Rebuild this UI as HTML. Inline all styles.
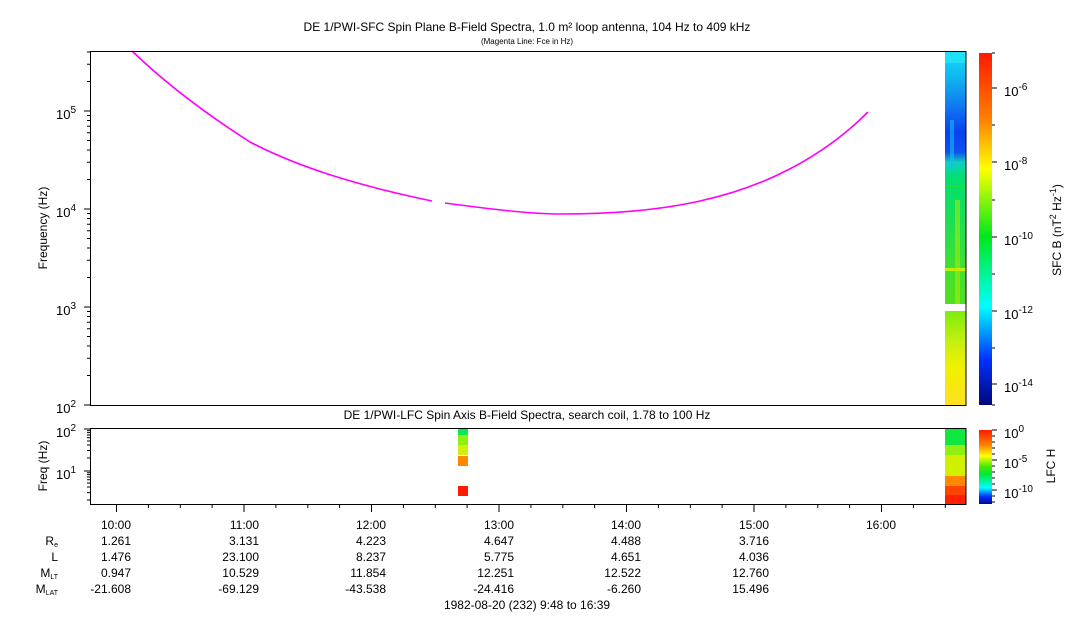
<!DOCTYPE html>
<html><head><meta charset="utf-8"><style>
html,body{margin:0;padding:0;background:#fff}
svg{display:block;font-family:"Liberation Sans",sans-serif}
</style></head><body>
<svg width="1083" height="620" viewBox="0 0 1083 620" xmlns="http://www.w3.org/2000/svg">
<defs>
<linearGradient id="jet" x1="0" y1="0" x2="0" y2="1">
<stop offset="0" stop-color="#ff1a00"/><stop offset="0.18" stop-color="#ff7a00"/><stop offset="0.33" stop-color="#ffff00"/><stop offset="0.52" stop-color="#00e81a"/><stop offset="0.72" stop-color="#00ffff"/><stop offset="0.87" stop-color="#0030ff"/><stop offset="1" stop-color="#00087a"/>
</linearGradient>
<linearGradient id="jet2" x1="0" y1="0" x2="0" y2="1">
<stop offset="0" stop-color="#ff1a00"/><stop offset="0.2" stop-color="#ff8000"/><stop offset="0.35" stop-color="#ffff00"/><stop offset="0.5" stop-color="#40e800"/><stop offset="0.6" stop-color="#00e83a"/><stop offset="0.78" stop-color="#00ffff"/><stop offset="0.9" stop-color="#0030ff"/><stop offset="1" stop-color="#000a8a"/>
</linearGradient>
<linearGradient id="spec" x1="0" y1="0" x2="0" y2="1">
<stop offset="0" stop-color="#10e0f8"/><stop offset="0.1" stop-color="#10b8f0"/><stop offset="0.22" stop-color="#1078f0"/><stop offset="0.32" stop-color="#0a40f0"/><stop offset="0.4" stop-color="#1050f0"/><stop offset="0.44" stop-color="#10d0c0"/><stop offset="0.5" stop-color="#00e070"/><stop offset="0.7" stop-color="#20e050"/><stop offset="0.85" stop-color="#40e030"/><stop offset="1" stop-color="#50e020"/>
</linearGradient>
<linearGradient id="spec2" x1="0" y1="0" x2="0" y2="1">
<stop offset="0" stop-color="#80ec10"/><stop offset="0.35" stop-color="#c8f010"/><stop offset="0.6" stop-color="#f0f000"/><stop offset="1" stop-color="#ffe020"/>
</linearGradient>
</defs>
<text x="527" y="31" font-size="12" text-anchor="middle">DE 1/PWI-SFC  Spin Plane B-Field Spectra, 1.0 m² loop antenna, 104 Hz to 409 kHz</text>
<text x="527" y="44" font-size="8" text-anchor="middle">(Magenta Line: Fce in Hz)</text>

<rect x="945" y="51" width="21" height="253" fill="url(#spec)"/>
<rect x="945" y="311" width="21" height="94" fill="url(#spec2)"/>
<rect x="945" y="51" width="21" height="12" fill="#20e0f8"/>
<rect x="945" y="185" width="21" height="2" fill="#20e040"/>
<rect x="945" y="268" width="21" height="3" fill="#c0f000"/>
<rect x="955" y="200" width="5" height="104" fill="#c0f000" opacity="0.45"/>
<rect x="950" y="120" width="4" height="50" fill="#10c0f0" opacity="0.6"/>

<path d="M132,51 C160,78 200,110 250,142 C300,168 360,186 432,201" fill="none" stroke="#ff00ff" stroke-width="1.6"/>
<path d="M445,203 C490,209 530,214 560,214 C610,214 660,210 700,201 C760,188 820,160 868,112" fill="none" stroke="#ff00ff" stroke-width="1.6"/>

<rect x="90.5" y="51.5" width="875.5" height="354" fill="none" stroke="#000"/>
<g stroke="#000">
<line x1="84" y1="111" x2="90" y2="111"/><line x1="84" y1="209" x2="90" y2="209"/><line x1="84" y1="307" x2="90" y2="307"/><line x1="84" y1="405" x2="90" y2="405"/>
<path d="M87,375.5h3M87,358.3h3M87,346h3M87,336.5h3M87,328.7h3M87,322.2h3M87,316.5h3M87,311.5h3
M87,277.5h3M87,260.3h3M87,248h3M87,238.5h3M87,230.7h3M87,224.2h3M87,218.5h3M87,213.5h3
M87,179.5h3M87,162.3h3M87,150h3M87,140.5h3M87,132.7h3M87,126.2h3M87,120.5h3M87,115.5h3
M87,81.5h3M87,64.3h3M87,52h3"/>
</g>
<g font-size="13" text-anchor="end">
<text x="76" y="119">10<tspan font-size="10" dy="-6">5</tspan></text>
<text x="76" y="217">10<tspan font-size="10" dy="-6">4</tspan></text>
<text x="76" y="315">10<tspan font-size="10" dy="-6">3</tspan></text>
<text x="76" y="413">10<tspan font-size="10" dy="-6">2</tspan></text>
</g>
<text transform="translate(47,228) rotate(-90)" font-size="12" text-anchor="middle">Frequency (Hz)</text>

<rect x="979" y="53" width="13" height="352" fill="url(#jet)"/>
<g stroke="#000"><path d="M992,53h3M992,88h5M992,125h3M992,162h5M992,200h3M992,237h5M992,274h3M992,311h5M992,348h3M992,384h5M992,405h3"/></g>
<g font-size="13">
<text x="1004" y="96">10<tspan font-size="10" dy="-6">-6</tspan></text>
<text x="1004" y="170">10<tspan font-size="10" dy="-6">-8</tspan></text>
<text x="1004" y="245">10<tspan font-size="10" dy="-6">-10</tspan></text>
<text x="1004" y="319">10<tspan font-size="10" dy="-6">-12</tspan></text>
<text x="1004" y="392">10<tspan font-size="10" dy="-6">-14</tspan></text>
</g>
<text transform="translate(1061,230) rotate(-90)" font-size="12" text-anchor="middle">SFC B (nT<tspan font-size="9" dy="-5">2</tspan><tspan dy="5"> Hz</tspan><tspan font-size="9" dy="-5">-1</tspan><tspan dy="5">)</tspan></text>

<text x="527" y="419" font-size="12" text-anchor="middle">DE 1/PWI-LFC  Spin Axis B-Field Spectra, search coil, 1.78 to 100 Hz</text>
<rect x="458" y="428" width="10" height="7" fill="#10e850"/>
<rect x="458" y="435" width="10" height="10" fill="#90f010"/>
<rect x="458" y="445" width="10" height="10" fill="#d0f010"/>
<rect x="458" y="456" width="10" height="10" fill="#ff8800"/>
<rect x="458" y="486" width="10" height="10" fill="#ff1a00"/>
<rect x="945" y="428" width="21" height="17" fill="#10e840"/>
<rect x="945" y="445" width="21" height="10" fill="#90f010"/>
<rect x="945" y="455" width="21" height="21" fill="#d0f000"/>
<rect x="945" y="476" width="21" height="10" fill="#ff8800"/>
<rect x="945" y="486" width="21" height="9" fill="#ff4400"/>
<rect x="945" y="495" width="21" height="9" fill="#ff2000"/>
<rect x="90.5" y="428.5" width="875.5" height="76" fill="none" stroke="#000"/>
<g stroke="#000">
<path d="M84,429h6M84,471h6M87,458h3M87,450.5h3M87,445h3M87,441h3M87,437.7h3M87,435h3M87,432.6h3M87,430.6h3M87,500h3M87,492.6h3M87,487h3M87,483h3M87,479.7h3M87,477h3M87,474.6h3M87,472.8h3"/>
</g>
<g font-size="13" text-anchor="end">
<text x="76" y="437">10<tspan font-size="10" dy="-6">2</tspan></text>
<text x="76" y="479">10<tspan font-size="10" dy="-6">1</tspan></text>
</g>
<text transform="translate(47,466) rotate(-90)" font-size="12" text-anchor="middle">Freq (Hz)</text>
<g stroke="#000">
<path d="M116.5,505v7M244,505v7M371.5,505v7M499,505v7M626.5,505v7M754,505v7M881.5,505v7
M148.4,505v3M180.3,505v3M212.1,505v3M275.9,505v3M307.8,505v3M339.6,505v3M403.4,505v3M435.3,505v3M467.1,505v3M530.9,505v3M562.8,505v3M594.6,505v3M658.4,505v3M690.3,505v3M722.1,505v3M785.9,505v3M817.8,505v3M849.6,505v3M913.4,505v3M945.3,505v3"/>
</g>
<rect x="979" y="430" width="13" height="74" fill="url(#jet2)"/>
<g stroke="#000"><path d="M992,430h5M992,436h3M992,442h3M992,448h3M992,454h3M992,460h5M992,466h3M992,472h3M992,478h3M992,484h3M992,490h5M992,496h3M992,502h3"/></g>
<g font-size="13">
<text x="1004" y="438">10<tspan font-size="10" dy="-6">0</tspan></text>
<text x="1004" y="468">10<tspan font-size="10" dy="-6">-5</tspan></text>
<text x="1004" y="498">10<tspan font-size="10" dy="-6">-10</tspan></text>
</g>
<text transform="translate(1055,466) rotate(-90)" font-size="12" text-anchor="middle">LFC H</text>

<g font-size="12" text-anchor="end">
<text x="131" y="529">10:00</text><text x="259" y="529">11:00</text><text x="386" y="529">12:00</text><text x="514" y="529">13:00</text><text x="641" y="529">14:00</text><text x="769" y="529">15:00</text><text x="896" y="529">16:00</text>
<text x="131" y="545">1.261</text><text x="259" y="545">3.131</text><text x="386" y="545">4.223</text><text x="514" y="545">4.647</text><text x="641" y="545">4.488</text><text x="769" y="545">3.716</text>
<text x="131" y="561">1.476</text><text x="259" y="561">23.100</text><text x="386" y="561">8.237</text><text x="514" y="561">5.775</text><text x="641" y="561">4.651</text><text x="769" y="561">4.036</text>
<text x="131" y="577">0.947</text><text x="259" y="577">10.529</text><text x="386" y="577">11.854</text><text x="514" y="577">12.251</text><text x="641" y="577">12.522</text><text x="769" y="577">12.760</text>
<text x="131" y="593">-21.608</text><text x="259" y="593">-69.129</text><text x="386" y="593">-43.538</text><text x="514" y="593">-24.416</text><text x="641" y="593">-6.260</text><text x="769" y="593">15.496</text>
<text x="58" y="545">R<tspan font-size="7" dy="2">e</tspan></text>
<text x="58" y="561">L</text>
<text x="58" y="577">M<tspan font-size="7" dy="2">LT</tspan></text>
<text x="58" y="593">M<tspan font-size="7" dy="2">LAT</tspan></text>
</g>
<text x="527" y="609" font-size="12" text-anchor="middle">1982-08-20 (232) 9:48 to 16:39</text>
</svg>
</body></html>
